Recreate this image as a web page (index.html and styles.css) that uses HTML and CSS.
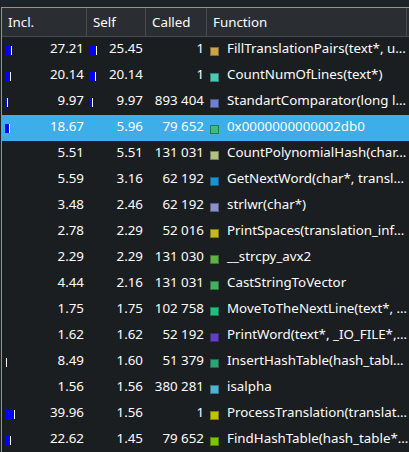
FILE: index.html
```html
<!DOCTYPE html>
<html>
<head>
<meta charset="utf-8">
<link rel="stylesheet" href="styles.css">
</head>
<body>
<div class="frame">
  <div class="head">
    <div class="hc">Incl.</div>
    <div class="hc">Self</div>
    <div class="hc">Called</div>
    <div class="hc">Function</div>
    <div class="hc rest"></div>
  </div>
  <div class="rows">
    <div class="row"><div class="num"><span class="bar" style="width:6px"></span><span class="v">27.21</span></div><div class="num"><span class="bar" style="width:6px"></span><span class="v">25.45</span></div><div class="num"><span class="v">1</span></div><div class="fn"><span class="sq c1"></span><span class="t">FillTranslationPairs(text*, u…</span></div></div>
    <div class="row"><div class="num"><span class="bar" style="width:5px"></span><span class="v">20.14</span></div><div class="num"><span class="bar" style="width:5px"></span><span class="v">20.14</span></div><div class="num"><span class="v">1</span></div><div class="fn"><span class="sq c2"></span><span class="t">CountNumOfLines(text*)</span></div></div>
    <div class="row"><div class="num"><span class="bar" style="width:2px"></span><span class="v">9.97</span></div><div class="num"><span class="bar" style="width:2px"></span><span class="v">9.97</span></div><div class="num"><span class="v">893&nbsp;404</span></div><div class="fn"><span class="sq c3"></span><span class="t">StandartComparator(long l…</span></div></div>
    <div class="row sel"><div class="num"><span class="bar" style="width:4px"></span><span class="v">18.67</span></div><div class="num"><span class="v">5.96</span></div><div class="num"><span class="v">79&nbsp;652</span></div><div class="fn"><span class="sq c4"></span><span class="t">0x0000000000002db0</span></div></div>
    <div class="row"><div class="num"><span class="v">5.51</span></div><div class="num"><span class="v">5.51</span></div><div class="num"><span class="v">131&nbsp;031</span></div><div class="fn"><span class="sq c5"></span><span class="t">CountPolynomialHash(char…</span></div></div>
    <div class="row"><div class="num"><span class="v">5.59</span></div><div class="num"><span class="v">3.16</span></div><div class="num"><span class="v">62&nbsp;192</span></div><div class="fn"><span class="sq c6"></span><span class="t">GetNextWord(char*, transl…</span></div></div>
    <div class="row"><div class="num"><span class="v">3.48</span></div><div class="num"><span class="v">2.46</span></div><div class="num"><span class="v">62&nbsp;192</span></div><div class="fn"><span class="sq c7"></span><span class="t">strlwr(char*)</span></div></div>
    <div class="row"><div class="num"><span class="v">2.78</span></div><div class="num"><span class="v">2.29</span></div><div class="num"><span class="v">52&nbsp;016</span></div><div class="fn"><span class="sq c8"></span><span class="t">PrintSpaces(translation_inf…</span></div></div>
    <div class="row"><div class="num"><span class="v">2.29</span></div><div class="num"><span class="v">2.29</span></div><div class="num"><span class="v">131&nbsp;030</span></div><div class="fn"><span class="sq c9"></span><span class="t">__strcpy_avx2</span></div></div>
    <div class="row"><div class="num"><span class="v">4.44</span></div><div class="num"><span class="v">2.16</span></div><div class="num"><span class="v">131&nbsp;031</span></div><div class="fn"><span class="sq c10"></span><span class="t">CastStringToVector</span></div></div>
    <div class="row"><div class="num"><span class="v">1.75</span></div><div class="num"><span class="v">1.75</span></div><div class="num"><span class="v">102&nbsp;758</span></div><div class="fn"><span class="sq c11"></span><span class="t">MoveToTheNextLine(text*, …</span></div></div>
    <div class="row"><div class="num"><span class="v">1.62</span></div><div class="num"><span class="v">1.62</span></div><div class="num"><span class="v">52&nbsp;192</span></div><div class="fn"><span class="sq c12"></span><span class="t">PrintWord(text*, _IO_FILE*,…</span></div></div>
    <div class="row"><div class="num"><span class="bar" style="width:1px"></span><span class="v">8.49</span></div><div class="num"><span class="v">1.60</span></div><div class="num"><span class="v">51&nbsp;379</span></div><div class="fn"><span class="sq c13"></span><span class="t">InsertHashTable(hash_tabl…</span></div></div>
    <div class="row"><div class="num"><span class="v">1.56</span></div><div class="num"><span class="v">1.56</span></div><div class="num"><span class="v">380&nbsp;281</span></div><div class="fn"><span class="sq c14"></span><span class="t">isalpha</span></div></div>
    <div class="row"><div class="num"><span class="bar" style="width:9px"></span><span class="v">39.96</span></div><div class="num"><span class="v">1.56</span></div><div class="num"><span class="v">1</span></div><div class="fn"><span class="sq c15"></span><span class="t">ProcessTranslation(translat…</span></div></div>
    <div class="row"><div class="num"><span class="bar" style="width:5px"></span><span class="v">22.62</span></div><div class="num"><span class="v">1.45</span></div><div class="num"><span class="v">79&nbsp;652</span></div><div class="fn"><span class="sq c16"></span><span class="t">FindHashTable(hash_table*…</span></div></div>
  </div>
</div>
</body>
</html>
```

FILE: styles.css
```css
html, body {
  margin: 0;
  padding: 0;
  background: #202326;
  height: 100%;
  overflow: hidden;
}
body {
  font-family: "Noto Sans", "DejaVu Sans", sans-serif;
  font-size: 13.33px;
  color: #fcfcfc;
}
.frame {
  margin: 7px 0 0 1px;
  border-top: 1px solid #3daee9;
  border-left: 1px solid #3daee9;
  background: #1b1e20;
  height: 100%;
}
.head {
  display: grid;
  grid-template-columns: 85px 59px 61px 200px 1fr;
  height: 28px;
  background: #2a2e32;
  border-bottom: 1px solid #464b51;
}
.hc {
  border-right: 1px solid #464b51;
  padding-left: 6px;
  line-height: 28px;
  white-space: nowrap;
}
.hc.rest {
  border-right: none;
}
.row {
  display: grid;
  grid-template-columns: 85px 59px 61px 200px 1fr;
  height: 26px;
  line-height: 22px;
  white-space: nowrap;
}
.row.sel {
  background: #3daee9;
}
.num {
  display: flex;
  align-items: flex-start;
  padding: 0 3px;
}
.num .v {
  margin-left: auto;
}
.bar {
  display: block;
  height: 9px;
  margin-top: 9px;
  background: #0000ff;
  border-right: 1px solid #ffffff;
  flex: none;
}
.fn {
  display: flex;
  align-items: flex-start;
  padding-left: 3px;
  grid-column: 4 / 6;
}
.sq {
  display: block;
  width: 7px;
  height: 7px;
  margin-top: 10px;
  margin-right: 8px;
  border: 1px solid rgba(0,0,0,0.35);
  flex: none;
}
.c1 { background: #c9a545; }
.c2 { background: #4fc9b5; }
.c3 { background: #6f80cf; }
.c4 { background: #3fba82; }
.c5 { background: #b2c283; }
.c6 { background: #1b95d0; }
.c7 { background: #8a90c8; }
.c8 { background: #c2b91f; }
.c9 { background: #5fb146; }
.c10 { background: #43b25f; }
.c11 { background: #1fc07f; }
.c12 { background: #5f3fc2; }
.c13 { background: #2fa373; }
.c14 { background: #4fb3d3; }
.c15 { background: #c2c200; }
.c16 { background: #7fc200; }
```
